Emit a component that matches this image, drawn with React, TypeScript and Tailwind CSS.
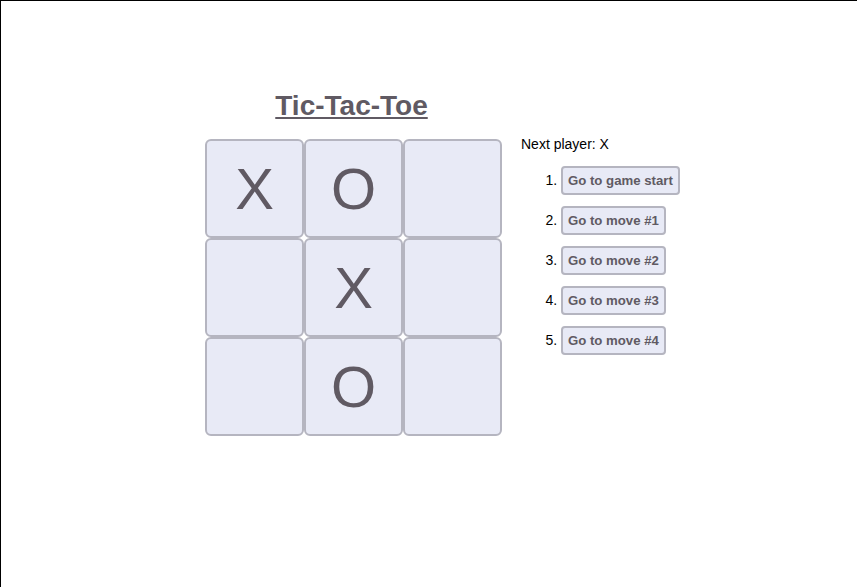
import React from "react";

const squares = ["X", "O", "", "", "X", "", "", "O", ""];
const moves = ["Go to game start", "Go to move #1", "Go to move #2", "Go to move #3", "Go to move #4"];

export default function App() {
  return (
    <div
      className="min-h-screen w-full border-t border-l border-black bg-white text-black"
      style={{ fontFamily: '"Liberation Sans", Arial, sans-serif' }}
    >
      <div className="flex flex-row items-start pl-[204px] pt-[89px]">
        <div className="flex flex-col items-center">
          <h1 className="text-[28px] font-bold text-[#605a63] underline leading-[31px] mb-[18px] pr-[4px]">
            Tic-Tac-Toe
          </h1>
          <div className="grid grid-cols-3">
            {squares.map((s, i) => (
              <button
                key={i}
                className="w-[99px] h-[99px] rounded-[6px] border-2 border-[#b5b5c0] bg-[#e8eaf6] text-[58px] leading-none text-[#605a63] flex items-center justify-center"
              >
                {s}
              </button>
            ))}
          </div>
        </div>
        <div className="ml-[19px] mt-[46px] flex flex-col">
          <div className="text-[14px] leading-[16px]">Next player: X</div>
          <ol className="list-decimal pl-[40px] mt-[14px] text-[14px] flex flex-col gap-[11px]">
            {moves.map((m) => (
              <li key={m}>
                <button className="h-[29px] px-[5px] rounded-[4px] border-2 border-[#b5b5c0] bg-[#e8eaf6] text-[13.2px] font-bold text-[#605a63]">
                  {m}
                </button>
              </li>
            ))}
          </ol>
        </div>
      </div>
    </div>
  );
}
